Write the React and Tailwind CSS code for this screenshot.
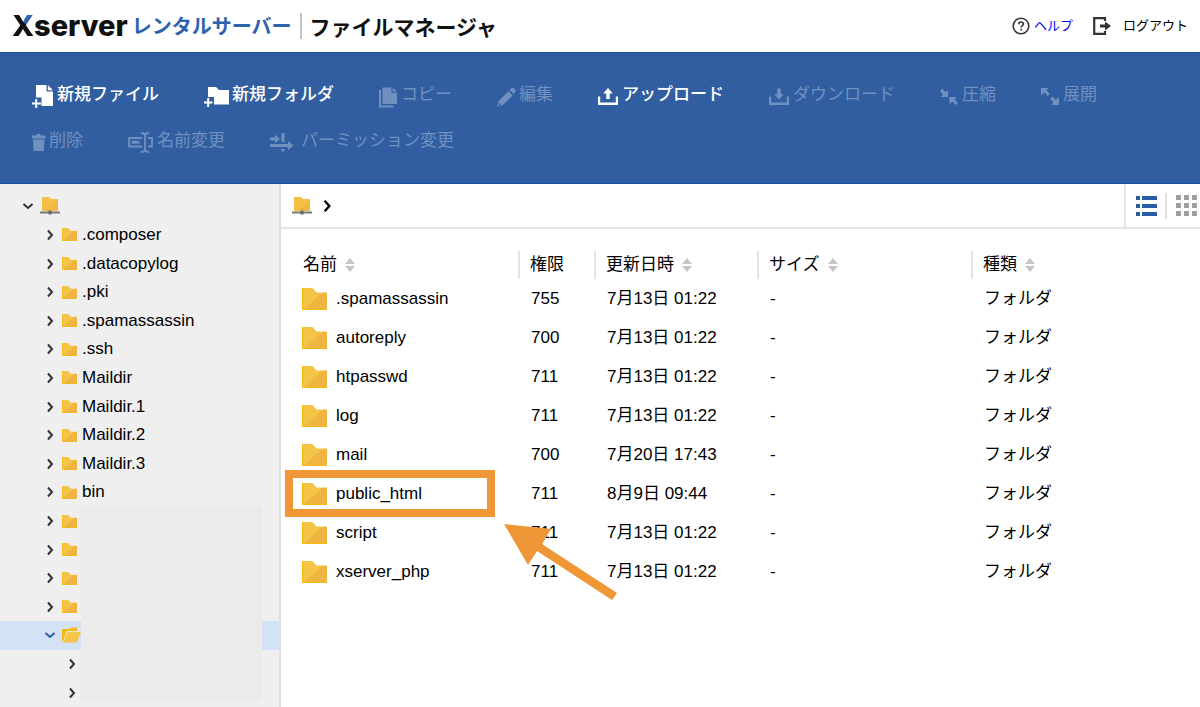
import { useId, useState } from 'react'

const TREE = ['.composer', '.datacopylog', '.pki', '.spamassassin', '.ssh', 'Maildir', 'Maildir.1', 'Maildir.2', 'Maildir.3', 'bin', '', '', '', '']

const FILES = [
  { name: '.spamassassin', mode: '755', date: '7月13日 01:22' },
  { name: 'autoreply', mode: '700', date: '7月13日 01:22' },
  { name: 'htpasswd', mode: '711', date: '7月13日 01:22' },
  { name: 'log', mode: '711', date: '7月13日 01:22' },
  { name: 'mail', mode: '700', date: '7月20日 17:43' },
  { name: 'public_html', mode: '711', date: '8月9日 09:44', marked: true },
  { name: 'script', mode: '711', date: '7月13日 01:22' },
  { name: 'xserver_php', mode: '711', date: '7月13日 01:22' }
]

const COLUMNS = [
  { label: '名前', width: 'w-[238px]', sortable: true },
  { label: '権限', width: 'w-[76px]' },
  { label: '更新日時', width: 'w-[163px]', sortable: true },
  { label: 'サイズ', width: 'w-[214px]', sortable: true },
  { label: '種類', width: '', sortable: true }
]

const NewFileIcon = () => (
  <svg width="25" height="24" viewBox="0 0 25 24" fill="currentColor">
    <path d="M4 0h10.500v6.500H21V21H9.500v-8.500H4z" />
    <path d="M15.800 0 21 5.200h-5.200z" />
    <path d="M3.200 14h2v3.500H9v2H5.200V23h-2v-3.500H0v-2h3.200z" />
  </svg>
)

const NewFolderIcon = () => (
  <svg width="28" height="24" viewBox="0 0 28 24" fill="currentColor">
    <path d="M4 2h8l3 3h10v14.500H10V12H4z" />
    <path d="M3.200 13h2v3.500H8.500v2H5.200V22h-2v-3.500H0v-2h3.200z" />
  </svg>
)

const CopyIcon = () => (
  <svg width="22" height="24" viewBox="0 0 22 24" fill="currentColor">
    <path d="M3.500 2.500h9v5.200H18V19H3.500z" />
    <path d="M13.600 2.500 18 6.600h-4.400z" />
    <path d="M0 5h2v15.500h12.500v2H0z" />
  </svg>
)

const EditIcon = () => (
  <svg width="22" height="24" viewBox="0 0 22 24" fill="currentColor">
    <path d="M1.200 16.500 11.500 6.200l4.200 4.200L5.400 20.500 0 21.500z" />
    <path d="m12.600 5.100 2.300-2.300q.9-.7 1.800.1l1.600 1.600q.8.900.1 1.700l-1.700 3.100z" />
    <path d="m1.800 17.600 2.500 2.400-2.800.7z" fill="#305ea0" />
  </svg>
)

const UploadIcon = () => (
  <svg width="24" height="24" viewBox="0 0 24 24" fill="currentColor">
    <path d="M0 11.500h2.200v6h15.600v-6H20V20H0z" />
    <path d="m10 3 4.800 5.400h-3V14H8.200V8.400h-3z" />
  </svg>
)

const DownloadIcon = () => (
  <svg width="24" height="24" viewBox="0 0 24 24" fill="currentColor">
    <path d="M0 11.500h2.200v6h15.600v-6H20V20H0z" />
    <path d="m10 14.500-4.800-5.200h3V3.500h3.600v5.800h3z" />
  </svg>
)

const CompressIcon = () => (
  <svg width="22" height="24" viewBox="0 0 22 24" fill="currentColor">
    <path d="m2 3.500 3.800 3.400L8 4.800V12H.5l2.400-2.200L0 5.800z" />
    <path d="M9 12h7.800l-2.300 2.500 3.400 3.500-2 2-3.600-3.400-2.500 2.400z" />
  </svg>
)

const ExpandIcon = () => (
  <svg width="22" height="24" viewBox="0 0 22 24" fill="currentColor">
    <path d="M0 3h7.500L5.400 5.300l3.400 3.600-2.100 2-3.500-3.500L0 10.500z" />
    <path d="m11.500 11.500 3.300 3.400 3.200-3V20h-8l2.500-2.700L9.400 14z" />
  </svg>
)

const DeleteIcon = () => (
  <svg width="17" height="24" viewBox="0 0 17 24" fill="currentColor">
    <path d="M4.500 4.500V3h4v1.500h5v3H0v-3z" />
    <path d="M1 8.500h11.500L11.800 20H1.700z" />
  </svg>
)

const RenameIcon = () => (
  <svg width="29" height="24" viewBox="0 0 29 24" fill="none" stroke="currentColor" strokeWidth="1.800">
    <path d="M14 7H1v8.500h13M20 7h4v8.500h-4" />
    <path d="M3.500 11.200h8" strokeWidth="3" />
    <path d="M13 2q4 0 4 3v13q0 3-4 3M21 2q-4 0-4 3m0 13q0 3 4 3" />
  </svg>
)

const PermissionIcon = () => (
  <svg width="31" height="24" viewBox="0 0 31 24" fill="currentColor">
    <path d="M0 6.500h5V3.800L10 8l-5 4.200V9.500H0zM11.500 2h3v9h-3z" />
    <path d="M0 13h18v-3.200l5.500 4.700-5.500 4.700V16H0zM11.500 18h3v2.500h-3z" />
  </svg>
)

const ACTIONS = [
  { label: '新規ファイル', icon: NewFileIcon, enabled: true },
  { label: '新規フォルダ', icon: NewFolderIcon, enabled: true },
  { label: 'コピー', icon: CopyIcon },
  { label: '編集', icon: EditIcon },
  { label: 'アップロード', icon: UploadIcon, enabled: true },
  { label: 'ダウンロード', icon: DownloadIcon },
  { label: '圧縮', icon: CompressIcon },
  { label: '展開', icon: ExpandIcon },
  { label: '削除', icon: DeleteIcon },
  { label: '名前変更', icon: RenameIcon },
  { label: 'パーミッション変更', icon: PermissionIcon }
]

function FolderIcon({ className }) {
  const id = useId()
  return (
    <svg className={className} viewBox="0 0 25 22" preserveAspectRatio="none">
      <linearGradient id={id} x1="0" y1="0" x2="1" y2="1">
        <stop offset="0.500" stopColor="#f4c447" />
        <stop offset="0.540" stopColor="#f0b541" />
      </linearGradient>
      <path d="M0 0h10.500l4 4.500H25V22H0z" fill={`url(#${id})`} />
      <path d="M.5 0v21.500H25" fill="none" stroke="#f5b90f" />
    </svg>
  )
}

const OpenFolderIcon = () => (
  <svg className="h-4 w-[19px] shrink-0" viewBox="0 0 19 16">
    <path d="M0 2h7l2-1.500h6V4H5L1.500 14H0z" fill="#f5b914" />
    <path d="M5.500 5H19l-4 10.500H1z" fill="#f4c44b" />
    <path d="M1 15 5.200 4.600H19" fill="none" stroke="#f7e3ab" strokeWidth="0.800" />
  </svg>
)

const ServerFolderIcon = () => (
  <svg className="h-[18px] w-5 shrink-0" viewBox="0 0 20 18">
    <path d="M2 0h7l2 2h7v12H2z" fill="#f4c145" />
    <path d="M18 3v11H5z" fill="#f0b741" />
    <path d="M0 14.500h20v2H0z" fill="#777" />
    <path d="M8.500 13.500h3v4h-3z" fill="#666" />
  </svg>
)

function Chevron({ open, className }) {
  return (
    <svg className={`shrink-0 ${className}`} viewBox="0 0 12 12" fill="none" stroke="currentColor" strokeWidth="2">
      {open ? <path d="m1.500 4 4.500 4 4.500-4" /> : <path d="m4 1.500 4 4.500-4 4.500" />}
    </svg>
  )
}

const SortIcon = () => (
  <svg className="h-[14px] w-[10px]" viewBox="0 0 10 14" fill="#c6c6c6">
    <path d="m5 0 5 6H0zM0 8h10l-5 6z" />
  </svg>
)

function Header() {
  return (
    <header className="flex h-[52px] items-center justify-between bg-white pl-3 pr-3">
      <div className="flex items-center font-bold text-[#111]">
        <span className="font-[Inter,sans-serif] text-[29px] font-extrabold leading-9">
          <span className="bg-[linear-gradient(55deg,#111_57%,#2f62ad_57%)] bg-clip-text text-transparent">X</span>server
        </span>
        <span className="ml-1 font-['Noto_Sans_CJK_JP',sans-serif] text-[20px] leading-9 text-[#2f62ad]">レンタルサーバー</span>
        <span className="ml-2 h-[26px] w-[2px] bg-[#c4c4c4]" />
        <h1 className="ml-2 font-['Noto_Sans_CJK_JP',sans-serif] text-[21px] leading-9">ファイルマネージャ</h1>
      </div>
      <div className="flex items-center text-[13px] leading-5">
        <a href="#help" className="flex items-center gap-1 text-[#0000ee]">
          <svg className="size-[18px]" viewBox="0 0 18 18" fill="none" stroke="#333">
            <circle cx="9" cy="9" r="7.800" strokeWidth="1.600" />
            <path d="M6.700 7.200c.1-3 4.600-2.700 4.600-.2 0 1.600-2.200 1.500-2.200 3.400M9.100 11.800v1.600" strokeWidth="1.600" />
          </svg>
          ヘルプ
        </a>
        <a href="#logout" className="ml-5 flex items-center gap-3 text-black">
          <svg className="size-[18px]" viewBox="0 0 18 18">
            <path d="M12 4V1.200H1.200v15.600H12V14" fill="none" stroke="#333" strokeWidth="2.200" />
            <path d="M7 7.500h5v-3L18 9l-6 4.500v-3H7z" fill="#333" />
          </svg>
          ログアウト
        </a>
      </div>
    </header>
  )
}

function Toolbar() {
  return (
    <nav className="flex flex-wrap gap-x-[45px] border-y border-[#1450a0] bg-[#305ea0] px-8 pb-[19px] pt-[19px]">
      {ACTIONS.map(({ label, icon: Icon, enabled }) => (
        <button
          key={label}
          disabled={!enabled}
          className={`flex h-[46px] items-center text-[17px] leading-6 [&>svg]:mt-1 ${enabled ? 'font-medium text-white' : 'text-[#7090c0]'}`}
        >
          <Icon />
          {label}
        </button>
      ))}
    </nav>
  )
}

function Sidebar() {
  return (
    <aside className="relative w-[281px] shrink-0 border-r-2 border-[#e0e0e0] bg-[#efefef] pt-2">
      <ul className="grid h-[515px] auto-rows-fr text-[17px] leading-6 text-black">
        <li className="flex items-center pl-[22px]">
          <Chevron open className="size-3 text-[#333]" />
          <span className="ml-[6px]"><ServerFolderIcon /></span>
        </li>
        {TREE.map((name, index) => (
          <li key={index} className="flex items-center pl-11">
            <Chevron className="size-3 text-[#333]" />
            <FolderIcon className="ml-[6px] h-[13px] w-[15px] shrink-0" />
            <span className="ml-[5px]">{name}</span>
          </li>
        ))}
        <li className="flex items-center bg-[#d4e2f5] pl-11">
          <Chevron open className="size-3 text-[#305ea0]" />
          <span className="ml-[6px]"><OpenFolderIcon /></span>
        </li>
        <li className="flex items-center pl-[66px]"><Chevron className="size-3 text-[#333]" /></li>
        <li className="flex items-center pl-[66px]"><Chevron className="size-3 text-[#333]" /></li>
      </ul>
      {/* hidden account names */}
      <div className="absolute bottom-[6px] left-[81px] h-[195px] w-[181px] bg-[#ebebeb]" />
    </aside>
  )
}

function PathBar({ view, setView }) {
  return (
    <div className="flex h-[45px] items-stretch border-b-2 border-[#e4e4e4]">
      <div className="flex flex-1 items-center gap-2 pl-[11px]">
        <ServerFolderIcon />
        <Chevron className="size-[14px] text-black" />
      </div>
      <div className="flex items-center border-l-2 border-[#e4e4e4] pl-[10px] pr-[3px]">
        <button onClick={() => setView('list')} aria-label="リスト表示" className={view === 'list' ? 'text-[#2a5ba5]' : 'text-[#a0a0a0]'}>
          <svg className="h-5 w-[21px]" viewBox="0 0 21 20" fill="currentColor">
            <path d="M0 0h4v4H0zM6 0h15v4H6zM0 8h4v4H0zM6 8h15v4H6zM0 16h4v4H0zM6 16h15v4H6z" />
          </svg>
        </button>
        <span className="ml-2 mr-[9px] h-[26px] w-[2px] bg-[#e0e0e0]" />
        <button onClick={() => setView('grid')} aria-label="アイコン表示" className={view === 'grid' ? 'text-[#2a5ba5]' : 'text-[#a0a0a0]'}>
          <svg className="size-[21px]" viewBox="0 0 21 21" fill="currentColor">
            <path d="M0 0h5v5H0zM8 0h5v5H8zM16 0h5v5h-5zM0 8h5v5H0zM8 8h5v5H8zM16 8h5v5h-5zM0 16h5v5H0zM8 16h5v5H8zM16 16h5v5h-5z" />
          </svg>
        </button>
      </div>
    </div>
  )
}

function Marker() {
  return (
    <>
      <div className="pointer-events-none absolute -inset-y-1 left-1 right-6 border-8 border-[#ef9737]" />
      <svg className="pointer-events-none absolute left-[223px] top-[50px] z-10 h-[76px] w-[114px]" viewBox="0 0 114 76" fill="#ef9737">
        <path d="m0 0 47 5-9 15 75 49-5 7-75-49-9 14z" />
      </svg>
    </>
  )
}

function FileTable() {
  return (
    <table className="mt-[22px] w-full table-fixed text-left text-[17px] leading-6 text-black">
      <thead>
        <tr className="h-7">
          {COLUMNS.map((col, index) => (
            <th key={col.label} className={`p-0 font-normal ${col.width} ${index === 0 ? 'pl-[22px]' : 'border-l-2 border-[#e4e4e4] pl-[10px]'}`}>
              <span className="flex items-center gap-2">
                {col.label}
                {col.sortable && <SortIcon />}
              </span>
            </th>
          ))}
        </tr>
      </thead>
      <tbody>
        {FILES.map(file => (
          <tr key={file.name} className="h-[39px]">
            <td className="relative p-0 pl-[21px]">
              <span className="flex items-center gap-[9px]">
                <FolderIcon className="h-[22px] w-[25px] shrink-0" />
                {file.name}
              </span>
              {file.marked && <Marker />}
            </td>
            <td className="p-0 pl-3">{file.mode}</td>
            <td className="p-0 pl-3">{file.date}</td>
            <td className="p-0 pl-3">-</td>
            <td className="p-0 pl-3">フォルダ</td>
          </tr>
        ))}
      </tbody>
    </table>
  )
}

export default function App() {
  const [view, setView] = useState('list')

  return (
    <div className="flex min-h-screen flex-col bg-white font-['Liberation_Sans','Noto_Sans_CJK_JP',sans-serif]">
      <Header />
      <Toolbar />
      <div className="flex flex-1">
        <Sidebar />
        <main className="min-w-0 flex-1">
          <PathBar view={view} setView={setView} />
          <FileTable />
        </main>
      </div>
    </div>
  )
}
